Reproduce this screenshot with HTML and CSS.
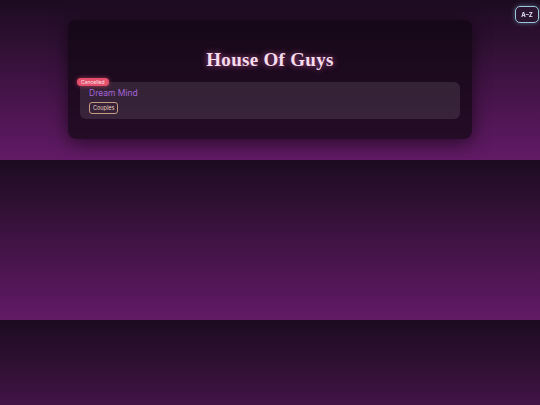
FILE: index.html
```html
<!DOCTYPE html>
<html lang="en">
<head>
  <meta charset="UTF-8">
  <title>House Of Guys</title>
  <link rel="stylesheet" href="styles.css">
</head>
<body>
  <button class="sort-btn">A–Z</button>

  <main class="board">
    <h1 class="title">House Of Guys</h1>
    <div class="show">
      <span class="status">Cancelled</span>
      <div class="show-name">Dream Mind</div>
      <div class="tags">
        <span class="tag">Couples</span>
      </div>
    </div>
  </main>
</body>
</html>
```

FILE: styles.css
```css
html {
  background: linear-gradient(to bottom, #1c0c20, #621a66);
  background-size: 100% 160px;
  min-height: 100%;
}
body {
  margin: 0;
  padding: 20px 68px;
  font-family: 'Inter', 'Open Sans', sans-serif;
  color: #eee;
}
.sort-btn {
  position: fixed;
  top: 6px;
  right: 1px;
  width: 24px;
  height: 17px;
  padding: 0;
  font-family: 'Inter', sans-serif;
  font-size: 6px;
  font-weight: 700;
  color: #e4e8f4;
  background: #2a1430;
  border: 1px solid #9cc6dc;
  border-radius: 5px;
  box-shadow: 0 0 5px rgba(140, 200, 230, 0.45);
}
.board {
  background: rgba(16, 7, 18, 0.72);
  border-radius: 8px;
  padding: 29px 12px 20px;
  box-shadow: 0 4px 18px rgba(0, 0, 0, 0.55);
}
.title {
  margin: 0 0 11px;
  text-align: center;
  font-family: 'Liberation Serif', serif;
  font-size: 19px;
  font-weight: 700;
  letter-spacing: 0.3px;
  color: #f6dcec;
  text-shadow: 0 0 6px rgba(240, 110, 190, 0.7);
}
.show {
  position: relative;
  background: rgba(255, 255, 255, 0.1);
  border-radius: 6px;
  padding: 6px 9px 5px;
}
.status {
  position: absolute;
  top: -4px;
  left: -3px;
  padding: 1px 4px;
  font-size: 5px;
  color: #fde4ea;
  background: #e4506c;
  border-radius: 8px;
  box-shadow: 0 0 4px rgba(240, 80, 110, 0.6);
}
.show-name {
  font-size: 8.5px;
  color: #a565d8;
}
.tags {
  display: flex;
  margin-top: 4px;
}
.tag {
  padding: 2px 3px;
  font-size: 5.5px;
  color: #ecd0bc;
  border: 1px solid #c69c7e;
  border-radius: 3px;
}
```
